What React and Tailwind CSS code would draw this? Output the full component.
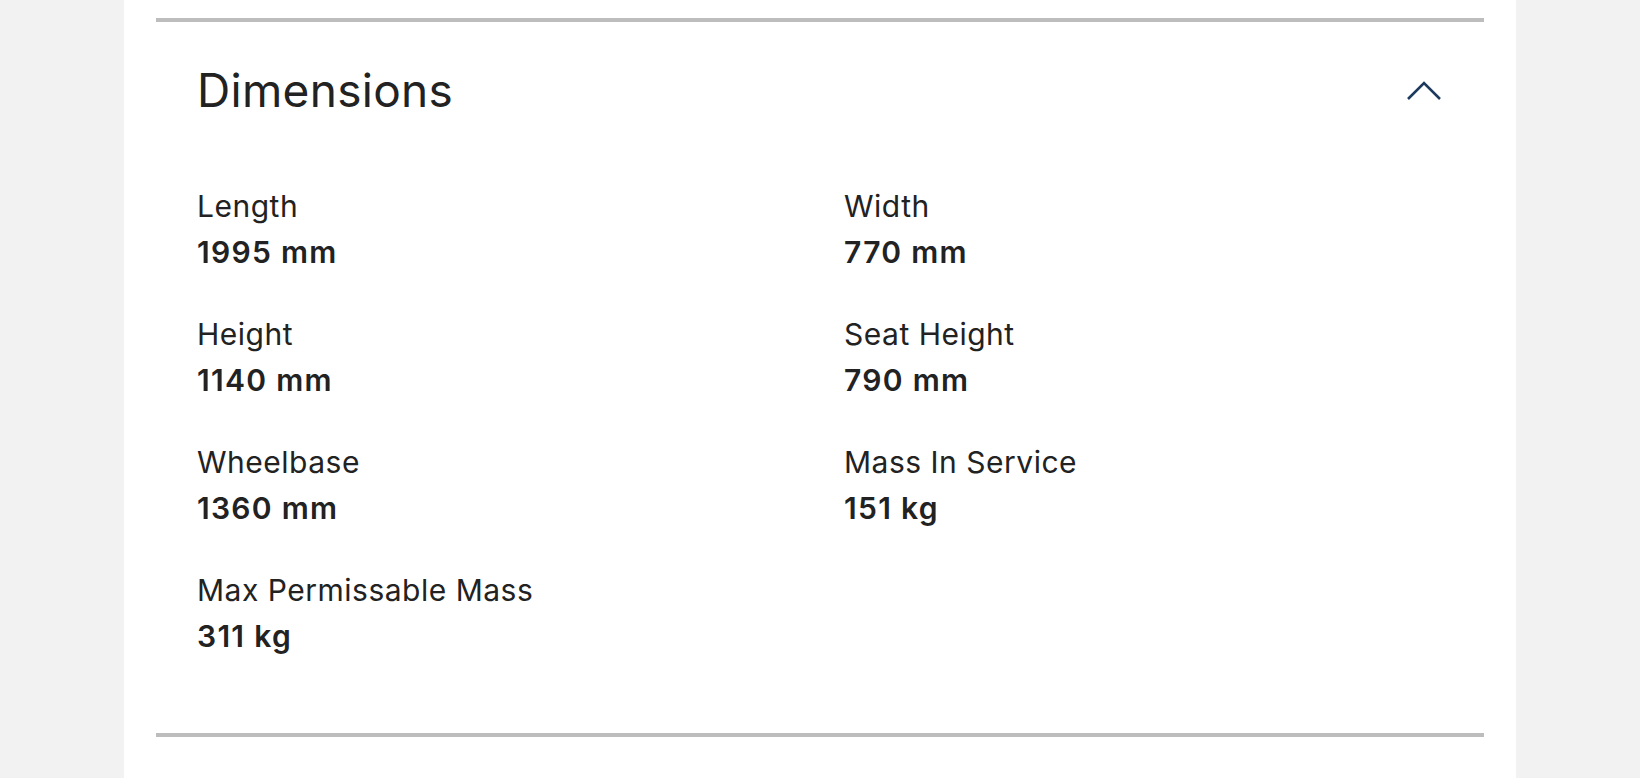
import React from 'react';

const specs = [
  { label: 'Length', value: '1995 mm' },
  { label: 'Width', value: '770 mm' },
  { label: 'Height', value: '1140 mm' },
  { label: 'Seat Height', value: '790 mm' },
  { label: 'Wheelbase', value: '1360 mm' },
  { label: 'Mass In Service', value: '151 kg' },
  { label: 'Max Permissable Mass', value: '311 kg' },
];

export default function App() {
  return (
    <div className="w-full h-[778px] bg-[#f2f2f2] flex justify-center overflow-hidden font-['Inter',sans-serif] text-[#222]">
      <div className="w-[1392px] bg-white px-8">
        <div className="h-1 bg-[#bdbdbd] mt-[18px]" />

        <div className="flex items-center justify-between pt-10 pl-[41px] pr-[43px]">
          <h2 className="text-[46px] leading-[56px] font-normal tracking-[0.3px]">Dimensions</h2>
          <svg width="34" height="19" viewBox="0 0 34 19" fill="none" stroke="#1c3a5e" strokeWidth="2.6">
            <polyline points="1,18 17,2 33,18" />
          </svg>
        </div>

        <div className="grid grid-cols-[647px_1fr] gap-y-[42px] pl-[41px] mt-[68px]">
          {specs.map((spec) => (
            <div key={spec.label} className="flex flex-col">
              <span className="text-[30px] leading-[40px] font-normal tracking-[0.5px]">{spec.label}</span>
              <span className="text-[30px] leading-[40px] font-semibold tracking-[1.3px] mt-[6px]">{spec.value}</span>
            </div>
          ))}
        </div>

        <div className="h-1 bg-[#bdbdbd] mt-[77px]" />
      </div>
    </div>
  );
}
